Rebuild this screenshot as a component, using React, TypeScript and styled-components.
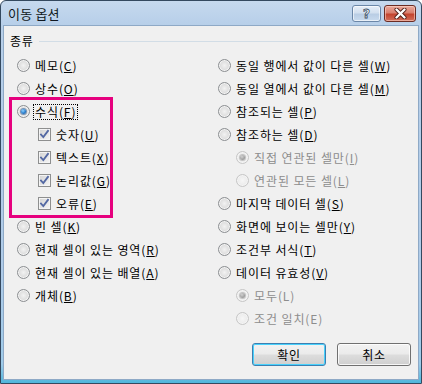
import React from "react";
import styled, { createGlobalStyle, css } from "styled-components";

const GlobalStyle = createGlobalStyle`
  html, body {
    margin: 0;
    padding: 0;
    background: #ffffff;
  }
  body {
    font-family: "Noto Sans CJK KR", "Noto Sans", sans-serif;
    font-size: 12px;
    color: #000;
  }
`;

const Frame = styled.div`
  width: 422px;
  height: 384px;
  box-sizing: border-box;
  border: 1px solid #34495f;
  border-radius: 6px 6px 0 0;
  background: linear-gradient(
    to bottom,
    #c6d9ee 0,
    #b7cfe9 24px,
    #afcbe8 70%,
    #9fcbe9 95%,
    #4fb6dc 100%
  );
  display: flex;
  flex-direction: column;
  padding: 0 2px 3px 2px;
  overflow: hidden;
`;

const TitleBar = styled.div`
  height: 24px;
  display: flex;
  align-items: flex-start;
  justify-content: space-between;
  padding: 0 3px 0 5px;
`;

const Title = styled.div`
  font-size: 13px;
  line-height: 16px;
  margin-top: 5px;
  color: #101820;
  letter-spacing: 0.2px;
`;

const CaptionGroup = styled.div`
  display: flex;
  gap: 3px;
  margin-top: 4px;
`;

const CaptionButton = styled.div<{ $close?: boolean }>`
  height: 17px;
  box-sizing: border-box;
  border-radius: 3px;
  display: flex;
  align-items: center;
  justify-content: center;
  ${(p) =>
    p.$close
      ? css`
          width: 32px;
          border: 1px solid #6b2c24;
          background: linear-gradient(
            to bottom,
            #e9a99c 0,
            #d9806f 45%,
            #c4442e 55%,
            #d2705c 100%
          );
          box-shadow: inset 0 0 0 1px rgba(255, 220, 210, 0.55);
        `
      : css`
          width: 29px;
          border: 1px solid #6b87a8;
          background: linear-gradient(
            to bottom,
            #e6eef8 0,
            #d3e0ef 45%,
            #b9cde4 55%,
            #c9dbee 100%
          );
          box-shadow: inset 0 0 0 1px rgba(255, 255, 255, 0.6);
        `}
`;

const HelpGlyph = styled.span`
  font-family: "DejaVu Sans", sans-serif;
  font-weight: bold;
  font-size: 12px;
  line-height: 12px;
  color: #ffffff;
  -webkit-text-stroke: 0.8px #3b4f66;
`;

const Client = styled.div`
  flex: 1;
  background: #f0f0f0;
  border: 1px solid #8ea9c6;
  display: flex;
  flex-direction: column;
  padding: 8px 6px 0 6px;
`;

const GroupHeader = styled.div`
  display: flex;
  align-items: center;
  height: 14px;
  line-height: 14px;
  gap: 6px;
  letter-spacing: 0.6px;
`;

const GroupLine = styled.div`
  flex: 1;
  height: 0;
  border-top: 1px solid #d2dde6;
  margin-top: 1px;
`;

const Columns = styled.div`
  display: grid;
  grid-template-columns: 201px 1fr;
  margin: 6px 0 0 7px;
`;

const Column = styled.div`
  display: flex;
  flex-direction: column;
`;

const Row = styled.div<{ $indent?: number }>`
  height: 23px;
  display: flex;
  align-items: center;
  gap: 5px;
  padding-left: ${(p) => p.$indent ?? 0}px;
  white-space: nowrap;
`;

const Label = styled.span<{ $disabled?: boolean; $focus?: boolean }>`
  line-height: 14px;
  color: ${(p) => (p.$disabled ? "#8d8d8d" : "#000")};
  letter-spacing: 0.9px;
  border: 1px dotted ${(p) => (p.$focus ? "#000" : "transparent")};
  padding: 0 1px;
  margin-left: -2px;
`;

const Highlight = styled.div`
  border: 3px solid #e6007e;
  margin: -3px 0 -3px -8px;
  padding-left: 5px;
  width: 104px;
  box-sizing: border-box;
`;

const RadioCircle = styled.span<{ $disabled?: boolean }>`
  width: 13px;
  height: 13px;
  flex: none;
  box-sizing: border-box;
  border-radius: 50%;
  border: 1px solid ${(p) => (p.$disabled ? "#c6c6c6" : "#8c8f92")};
  background: ${(p) =>
    p.$disabled
      ? "radial-gradient(circle at 50% 50%, #f6f6f6 0, #ececec 60%, #e2e2e2 100%)"
      : "radial-gradient(circle at 50% 50%, #f2f2f2 0, #e0e0e0 50%, #cbcbcb 100%)"};
  display: flex;
  align-items: center;
  justify-content: center;
  box-shadow: inset 0 0 0 1px #f4f4f4;
`;

const RadioDot = styled.span<{ $disabled?: boolean }>`
  width: 5px;
  height: 5px;
  border-radius: 50%;
  background: ${(p) =>
    p.$disabled
      ? "radial-gradient(circle at 40% 35%, #d2d2d2 0, #a0a0a0 60%, #8a8a8a 100%)"
      : "radial-gradient(circle at 40% 35%, #8fd3ff 0, #2a7fcf 55%, #0f4a8c 100%)"};
  box-shadow: 0 0 0 1px
    ${(p) => (p.$disabled ? "rgba(140,140,140,0.45)" : "rgba(20,70,130,0.5)")};
`;

const CheckBoxBox = styled.span`
  width: 13px;
  height: 13px;
  flex: none;
  box-sizing: border-box;
  border: 1px solid #8e8f8f;
  background: linear-gradient(135deg, #d2d2d2 0, #e4e4e4 50%, #f6f6f6 100%);
  box-shadow: inset 0 0 0 1px #f4f4f4;
  display: flex;
  align-items: center;
  justify-content: center;
`;

const ButtonBar = styled.div`
  display: flex;
  justify-content: flex-end;
  gap: 11px;
  margin-top: 13px;
  padding-right: 1px;
`;

const PushButton = styled.div<{ $default?: boolean }>`
  width: 74px;
  height: 23px;
  box-sizing: border-box;
  border-radius: 3px;
  display: flex;
  align-items: center;
  justify-content: center;
  letter-spacing: 0.6px;
  background: linear-gradient(
    to bottom,
    #f2f2f2 0,
    #ebebeb 48%,
    #dddddd 52%,
    #cfcfcf 100%
  );
  border: 1px solid ${(p) => (p.$default ? "#3c7fb1" : "#707070")};
  box-shadow: inset 0 0 0 1px
    ${(p) => (p.$default ? "#48d1fc" : "rgba(255,255,255,0.8)")};
`;

type Item = {
  kind: "radio" | "check";
  label: string;
  key: string;
  checked?: boolean;
  disabled?: boolean;
  focus?: boolean;
  indent?: number;
  noUnderline?: boolean;
};

const Radio: React.FC<{ checked?: boolean; disabled?: boolean }> = ({
  checked,
  disabled,
}) => (
  <RadioCircle $disabled={disabled}>
    {checked && <RadioDot $disabled={disabled} />}
  </RadioCircle>
);

const CheckBox: React.FC = () => (
  <CheckBoxBox>
    <svg width="11" height="11" viewBox="0 0 11 11">
      <path
        d="M2 5.6 L4.3 8 L9 1.8"
        fill="none"
        stroke="#5368a3"
        strokeWidth="1.8"
        strokeLinecap="square"
      />
    </svg>
  </CheckBoxBox>
);

const OptionRow: React.FC<{ item: Item }> = ({ item }) => (
  <Row $indent={item.indent}>
    {item.kind === "radio" ? (
      <Radio checked={item.checked} disabled={item.disabled} />
    ) : (
      <CheckBox />
    )}
    <Label $disabled={item.disabled} $focus={item.focus}>
      {item.label}(
      {item.noUnderline ? item.key : <u>{item.key}</u>})
    </Label>
  </Row>
);

const leftTop: Item[] = [
  { kind: "radio", label: "메모", key: "C" },
  { kind: "radio", label: "상수", key: "O" },
];

const highlighted: Item[] = [
  { kind: "radio", label: "수식", key: "F", checked: true, focus: true },
  { kind: "check", label: "숫자", key: "U", indent: 21 },
  { kind: "check", label: "텍스트", key: "X", indent: 21 },
  { kind: "check", label: "논리값", key: "G", indent: 21 },
  { kind: "check", label: "오류", key: "E", indent: 21 },
];

const leftBottom: Item[] = [
  { kind: "radio", label: "빈 셀", key: "K" },
  { kind: "radio", label: "현재 셀이 있는 영역", key: "R" },
  { kind: "radio", label: "현재 셀이 있는 배열", key: "A" },
  { kind: "radio", label: "개체", key: "B" },
];

const right: Item[] = [
  { kind: "radio", label: "동일 행에서 값이 다른 셀", key: "W" },
  { kind: "radio", label: "동일 열에서 값이 다른 셀", key: "M" },
  { kind: "radio", label: "참조되는 셀", key: "P" },
  { kind: "radio", label: "참조하는 셀", key: "D" },
  {
    kind: "radio",
    label: "직접 연관된 셀만",
    key: "I",
    checked: true,
    disabled: true,
    indent: 18,
  },
  { kind: "radio", label: "연관된 모든 셀", key: "L", disabled: true, indent: 18 },
  { kind: "radio", label: "마지막 데이터 셀", key: "S" },
  { kind: "radio", label: "화면에 보이는 셀만", key: "Y" },
  { kind: "radio", label: "조건부 서식", key: "T" },
  { kind: "radio", label: "데이터 유효성", key: "V" },
  {
    kind: "radio",
    label: "모두",
    key: "L",
    checked: true,
    disabled: true,
    indent: 18,
    noUnderline: true,
  },
  {
    kind: "radio",
    label: "조건 일치",
    key: "E",
    disabled: true,
    indent: 18,
    noUnderline: true,
  },
];

export default function App() {
  return (
    <>
      <GlobalStyle />
      <Frame>
        <TitleBar>
          <Title>이동 옵션</Title>
          <CaptionGroup>
            <CaptionButton>
              <HelpGlyph>?</HelpGlyph>
            </CaptionButton>
            <CaptionButton $close>
              <svg width="13" height="11" viewBox="0 0 13 11">
                <path
                  d="M2.5 1.5 L10.5 9.5 M10.5 1.5 L2.5 9.5"
                  stroke="#4a1a14"
                  strokeWidth="4"
                  strokeLinecap="round"
                />
                <path
                  d="M2.5 1.5 L10.5 9.5 M10.5 1.5 L2.5 9.5"
                  stroke="#ffffff"
                  strokeWidth="2.4"
                  strokeLinecap="round"
                />
              </svg>
            </CaptionButton>
          </CaptionGroup>
        </TitleBar>
        <Client>
          <GroupHeader>
            <span>종류</span>
            <GroupLine />
          </GroupHeader>
          <Columns>
            <Column>
              {leftTop.map((it) => (
                <OptionRow key={it.label} item={it} />
              ))}
              <Highlight>
                {highlighted.map((it) => (
                  <OptionRow key={it.label} item={it} />
                ))}
              </Highlight>
              {leftBottom.map((it) => (
                <OptionRow key={it.label} item={it} />
              ))}
            </Column>
            <Column>
              {right.map((it) => (
                <OptionRow key={it.label} item={it} />
              ))}
            </Column>
          </Columns>
          <ButtonBar>
            <PushButton $default>확인</PushButton>
            <PushButton>취소</PushButton>
          </ButtonBar>
        </Client>
      </Frame>
    </>
  );
}
